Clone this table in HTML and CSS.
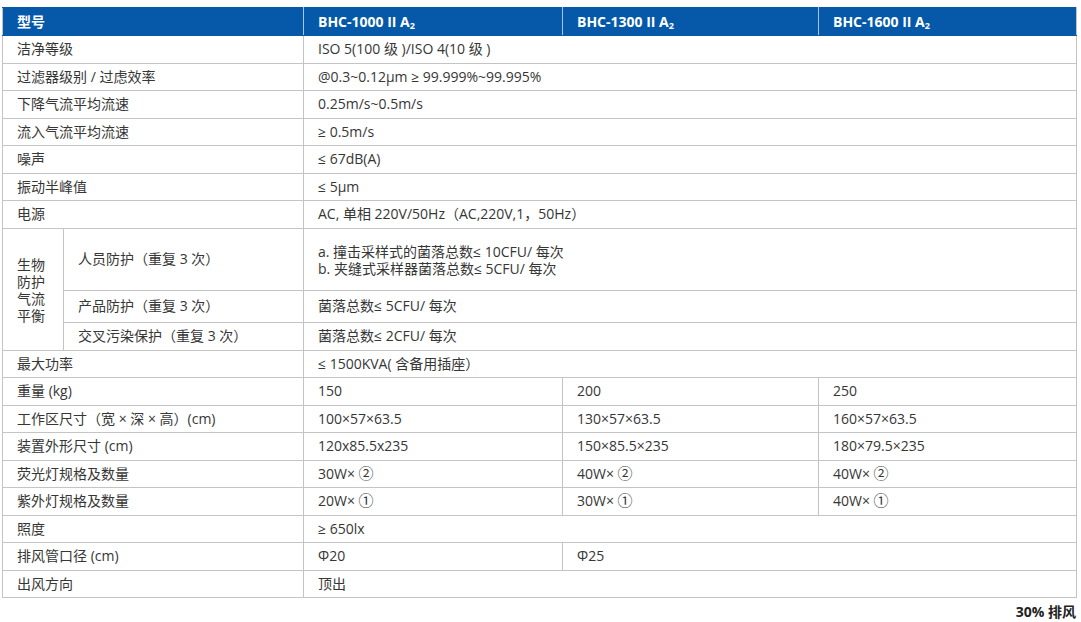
FILE: index.html
```html
<!DOCTYPE html>
<html lang="zh">
<head>
<meta charset="utf-8">
<title>BHC 规格参数</title>
<link rel="stylesheet" href="styles.css">
</head>
<body>
<div class="wrap">
<table class="spec">
  <colgroup>
    <col class="c-sub1"><col class="c-sub2"><col class="c2"><col class="c3"><col class="c4">
  </colgroup>
  <thead>
    <tr class="r-head">
      <th colspan="2">型号</th>
      <th>BHC-1000 II A<sub>2</sub></th>
      <th>BHC-1300 II A<sub>2</sub></th>
      <th>BHC-1600 II A<sub>2</sub></th>
    </tr>
  </thead>
  <tbody>
    <tr><td colspan="2">洁净等级</td><td colspan="3">ISO 5(100 级 )/ISO 4(10 级 )</td></tr>
    <tr><td colspan="2">过滤器级别 / 过虑效率</td><td colspan="3">@0.3~0.12μm ≥ 99.999%~99.995%</td></tr>
    <tr><td colspan="2">下降气流平均流速</td><td colspan="3">0.25m/s~0.5m/s</td></tr>
    <tr><td colspan="2">流入气流平均流速</td><td colspan="3">≥ 0.5m/s</td></tr>
    <tr><td colspan="2">噪声</td><td colspan="3">≤ 67dB(A)</td></tr>
    <tr><td colspan="2">振动半峰值</td><td colspan="3">≤ 5μm</td></tr>
    <tr><td colspan="2">电源</td><td colspan="3">AC, 单相 220V/50Hz（AC,220V,1，50Hz）</td></tr>
    <tr class="r-bio1">
      <td rowspan="3" class="bio">生物<br>防护<br>气流<br>平衡</td>
      <td class="sub">人员防护（重复 3 次）</td>
      <td colspan="3" class="two"><div class="ln">a. 撞击采样式的菌落总数≤ 10CFU/ 每次</div><div class="ln">b. 夹缝式采样器菌落总数≤ 5CFU/ 每次</div></td>
    </tr>
    <tr class="r-bio2"><td class="sub">产品防护（重复 3 次）</td><td colspan="3">菌落总数≤ 5CFU/ 每次</td></tr>
    <tr><td class="sub">交叉污染保护（重复 3 次）</td><td colspan="3">菌落总数≤ 2CFU/ 每次</td></tr>
    <tr><td colspan="2">最大功率</td><td colspan="3">≤ 1500KVA( 含备用插座）</td></tr>
    <tr><td colspan="2">重量 (kg)</td><td>150</td><td>200</td><td>250</td></tr>
    <tr><td colspan="2">工作区尺寸（宽 × 深 × 高）(cm)</td><td>100×57×63.5</td><td>130×57×63.5</td><td>160×57×63.5</td></tr>
    <tr><td colspan="2">装置外形尺寸 (cm)</td><td>120x85.5x235</td><td>150×85.5×235</td><td>180×79.5×235</td></tr>
    <tr><td colspan="2">荧光灯规格及数量</td><td>30W× <span class="cn">②</span></td><td>40W× <span class="cn">②</span></td><td>40W× <span class="cn">②</span></td></tr>
    <tr><td colspan="2">紫外灯规格及数量</td><td>20W× <span class="cn">①</span></td><td>30W× <span class="cn">①</span></td><td>40W× <span class="cn">①</span></td></tr>
    <tr><td colspan="2">照度</td><td colspan="3">≥ 650lx</td></tr>
    <tr><td colspan="2">排风管口径 (cm)</td><td>Φ20</td><td colspan="2">Φ25</td></tr>
    <tr><td colspan="2">出风方向</td><td colspan="3">顶出</td></tr>
  </tbody>
</table>
<div class="note">30% 排风</div>
</div>
</body>
</html>
```

FILE: styles.css
```css
html, body {
  margin: 0;
  padding: 0;
  background: #ffffff;
}
body {
  font-family: "Open Sans", "Noto Sans CJK SC", sans-serif;
  color: #363636;
  font-size: 14px;
}
.wrap {
  width: 1075px;
  padding: 7px 0 0 2px;
}
.spec {
  width: 1075px;
  border-collapse: collapse;
  table-layout: fixed;
}
.c-sub1 { width: 61px; }
.c-sub2 { width: 240px; }
.c2 { width: 259px; }
.c3 { width: 256px; }
.c4 { width: 258px; }
.spec td, .spec th {
  border: 1px solid #c4c4c4;
  padding: 0 0 0 14px;
  height: 26.5px;
  text-align: left;
  vertical-align: middle;
  white-space: nowrap;
  line-height: 16px;
}
.spec th {
  background: #0559a8;
  color: #ffffff;
  font-weight: 700;
  height: 27px;
  border-color: #0559a8;
  border-left-color: #a9c4e4;
  border-right-color: #a9c4e4;
  font-size: 14px;
}
.spec th:first-child { border-left-color: #c4c4c4; }
.spec th:last-child { border-right-color: #c4c4c4; }
.spec th sub {
  font-size: 9px;
  vertical-align: -2px;
  line-height: 0;
}
.cn {
  font-size: 15px;
  line-height: 0;
}
.spec td.bio {
  white-space: normal;
  padding-left: 14px;
  line-height: 17px;
  padding-top: 2px;
}
.spec td.sub { padding-left: 14px; }
.r-bio1 td { height: 59px; }
.spec td.two { padding-top: 2px; }
.ln { line-height: 17px; }
.r-bio2 td { height: 31.5px; }
.note {
  text-align: right;
  font-weight: 700;
  color: #222222;
  font-size: 14px;
  line-height: 16px;
  padding-top: 6px;
  width: 1074px;
}
```
